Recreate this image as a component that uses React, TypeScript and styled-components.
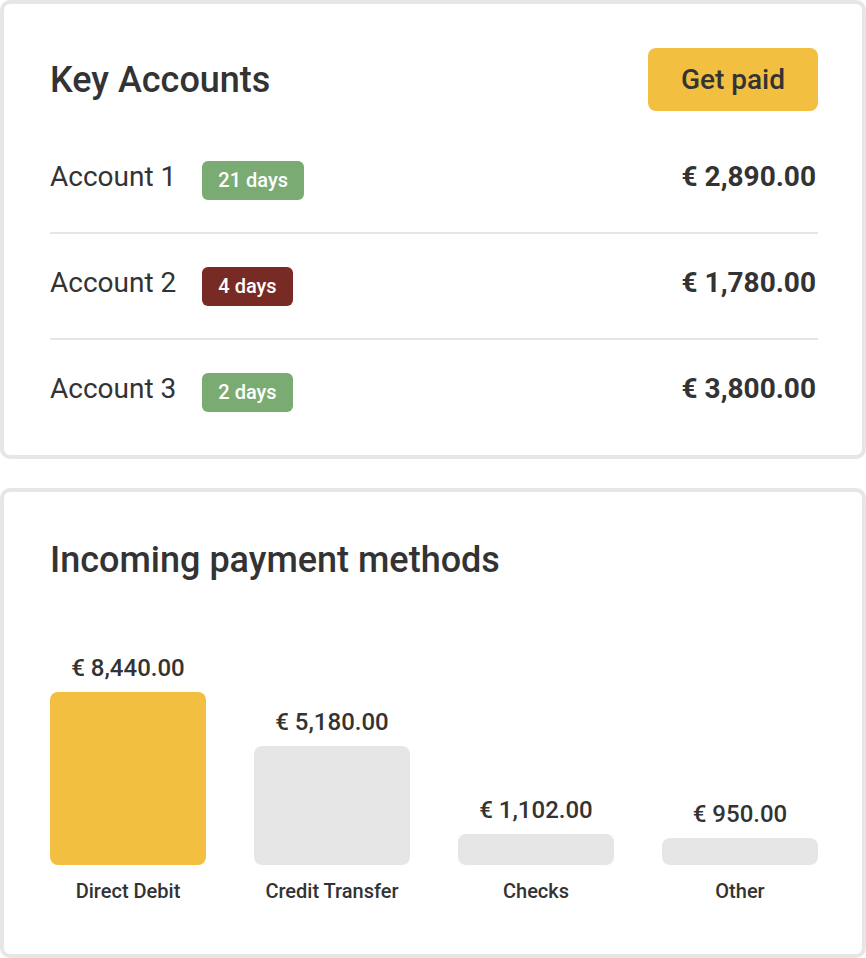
import React from "react";
import styled, { createGlobalStyle } from "styled-components";

const GlobalStyle = createGlobalStyle`
  html, body {
    margin: 0;
    padding: 0;
    background: #ffffff;
  }
  body {
    font-family: Roboto, "Liberation Sans", Arial, sans-serif;
    color: #333333;
  }
  * { box-sizing: border-box; }
`;

const Page = styled.div`
  width: 866px;
  display: flex;
  flex-direction: column;
  gap: 29px;
`;

const Card = styled.section<{ $top: number; $bottom: number }>`
  border: 4px solid #e6e6e6;
  border-radius: 10px;
  background: #ffffff;
  padding: ${(p) => p.$top}px 44px ${(p) => p.$bottom}px 46px;
  display: flex;
  flex-direction: column;
`;

const Header = styled.header`
  display: flex;
  align-items: center;
  justify-content: space-between;
  height: 63px;
  margin-bottom: 17px;
`;

const Title = styled.h2`
  margin: 0;
  font-size: 36px;
  line-height: 42px;
  font-weight: 500;
  color: #333333;
`;

const PrimaryButton = styled.button`
  width: 170px;
  height: 63px;
  border: none;
  border-radius: 8px;
  background: #f2bf40;
  color: #333333;
  font-family: Roboto, "Liberation Sans", Arial, sans-serif;
  font-size: 28px;
  font-weight: 500;
  cursor: pointer;
`;

const AccountList = styled.ul`
  list-style: none;
  margin: 0;
  padding: 0;
`;

const AccountRow = styled.li`
  height: 106px;
  display: flex;
  align-items: center;
  border-bottom: 2px solid #e6e6e6;
  &:last-child {
    height: 104px;
    border-bottom: none;
  }
`;

const AccountName = styled.span`
  font-size: 28px;
  line-height: 33px;
  font-weight: 400;
  color: #333333;
  margin-bottom: 8px;
`;

const Badge = styled.span<{ $tone: "ok" | "late" }>`
  margin-left: 26px;
  height: 39px;
  padding: 0 16px;
  display: inline-flex;
  align-items: center;
  border-radius: 6px;
  background: ${(p) => (p.$tone === "ok" ? "#7aab72" : "#782a24")};
  color: #ffffff;
  font-size: 20px;
  line-height: 39px;
  font-weight: 500;
`;

const Amount = styled.span`
  margin-left: auto;
  margin-right: 2px;
  font-size: 28px;
  line-height: 33px;
  font-weight: 700;
  color: #333333;
  margin-bottom: 8px;
`;

const Chart = styled.div`
  margin-top: 73px;
  display: flex;
  align-items: flex-end;
  gap: 48px;
`;

const Column = styled.div`
  width: 156px;
  display: flex;
  flex-direction: column;
  align-items: center;
`;

const BarValue = styled.span`
  font-size: 24px;
  line-height: 28px;
  font-weight: 500;
  color: #333333;
  margin-bottom: 10px;
`;

const Bar = styled.div<{ $highlight: boolean }>`
  width: 100%;
  border-radius: 8px;
  background: ${(p) => (p.$highlight ? "#f2bf40" : "#e6e6e6")};
`;

const BarLabel = styled.span`
  margin-top: 14px;
  font-size: 20px;
  line-height: 24px;
  font-weight: 500;
  color: #333333;
`;

const accounts: { name: string; days: string; tone: "ok" | "late"; amount: string }[] = [
  { name: "Account 1", days: "21 days", tone: "ok", amount: "€ 2,890.00" },
  { name: "Account 2", days: "4 days", tone: "late", amount: "€ 1,780.00" },
  { name: "Account 3", days: "2 days", tone: "ok", amount: "€ 3,800.00" },
];

const methods = [
  { label: "Direct Debit", value: "€ 8,440.00", height: 173, highlight: true },
  { label: "Credit Transfer", value: "€ 5,180.00", height: 119, highlight: false },
  { label: "Checks", value: "€ 1,102.00", height: 31, highlight: false },
  { label: "Other", value: "€ 950.00", height: 27, highlight: false },
];

export default function App() {
  return (
    <>
      <GlobalStyle />
      <Page>
        <Card $top={44} $bottom={11}>
          <Header>
            <Title>Key Accounts</Title>
            <PrimaryButton>Get paid</PrimaryButton>
          </Header>
          <AccountList>
            {accounts.map((a) => (
              <AccountRow key={a.name}>
                <AccountName>{a.name}</AccountName>
                <Badge $tone={a.tone}>{a.days}</Badge>
                <Amount>{a.amount}</Amount>
              </AccountRow>
            ))}
          </AccountList>
        </Card>
        <Card $top={47} $bottom={51}>
          <Title>Incoming payment methods</Title>
          <Chart>
            {methods.map((m) => (
              <Column key={m.label}>
                <BarValue>{m.value}</BarValue>
                <Bar $highlight={m.highlight} style={{ height: m.height }} />
                <BarLabel>{m.label}</BarLabel>
              </Column>
            ))}
          </Chart>
        </Card>
      </Page>
    </>
  );
}
